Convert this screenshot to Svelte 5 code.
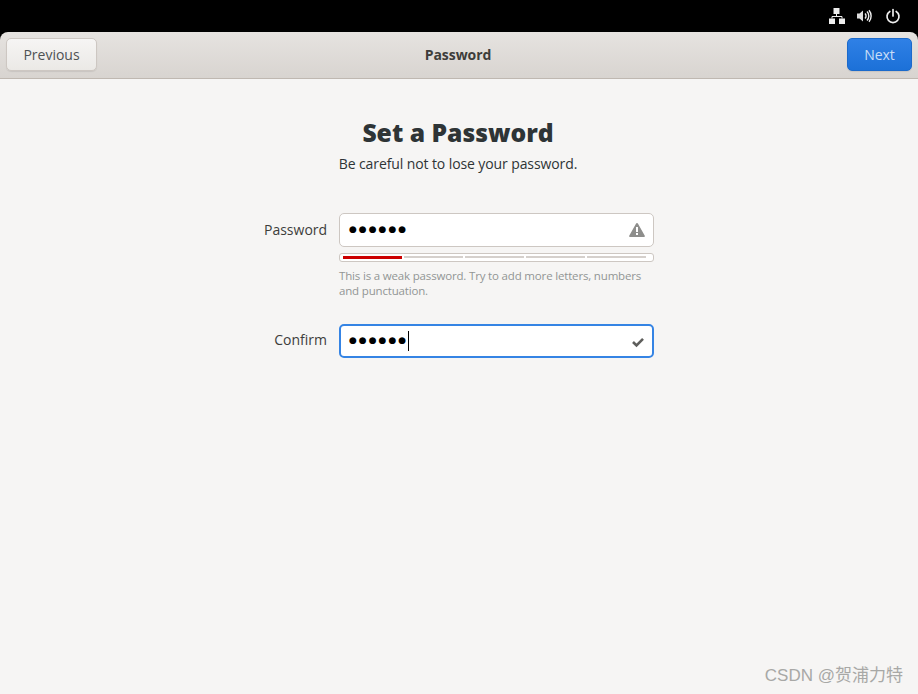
<script>
  const strengthSegments = [59, 59, 59, 59, 59];
  const dots = "●●●●●●";
</script>

<div class="screen">
  <div class="topbar">
    <svg class="tray network" width="16" height="16" viewBox="0 0 16 16">
      <path fill="#eee" d="M4.500 0h6v6h-6zM0 10.500h6V16H0zM10 10.500h6V16h-6z"/>
      <path fill="none" stroke="#eee" d="M7.500 6v2.500M3 10.500V8.500h10v2"/>
    </svg>
    <svg class="tray" width="16" height="16" viewBox="0 0 16 16">
      <path fill="#ddd" d="M1 5.500h2.500L7 2.500v11l-3.500-3H1z"/>
      <path fill="none" stroke="#eee" stroke-width="1.400" d="M9 5.500a3.500 3.500 0 0 1 0 5M11 3.500a6.500 6.500 0 0 1 0 9M13 2.200a9 9 0 0 1 0 11.600"/>
    </svg>
    <svg class="tray" width="16" height="16" viewBox="0 0 16 16">
      <path fill="none" stroke="#eee" stroke-width="1.700" stroke-linecap="round" d="M8 1.500V8M4.800 3.500a6 6 0 1 0 6.400 0"/>
    </svg>
  </div>

  <header class="headerbar">
    <button class="btn">Previous</button>
    <span class="page-title">Password</span>
    <button class="btn primary">Next</button>
  </header>

  <main class="content">
    <h1>Set a Password</h1>
    <p class="subtitle">Be careful not to lose your password.</p>

    <div class="form">
      <span class="label">Password</span>
      <div class="entry">
        <span class="dots">{dots}</span>
        <svg width="16" height="16" viewBox="0 0 16 16">
          <path fill="#8e8e8c" fill-rule="evenodd" d="M8 1c.4 0 .7.200.9.500l6.900 12.300c.3.600-.1 1.200-.8 1.200H1c-.7 0-1.100-.6-.8-1.200L7.100 1.500C7.300 1.200 7.600 1 8 1zM7 5v5h2V5zm0 6v2h2v-2z"/>
        </svg>
      </div>

      <div class="strength">
        <div class="fill"></div>
        {#each strengthSegments as w}
          <div class="segment" style="width: {w}px"></div>
        {/each}
      </div>
      <p class="hint">This is a weak password. Try to add more letters, numbers and punctuation.</p>

      <span class="label confirm-label">Confirm</span>
      <div class="entry focused confirm-entry">
        <span class="dots">{dots}</span><span class="caret"></span>
        <svg class="check" width="16" height="16" viewBox="0 0 16 16">
          <path fill="none" stroke="#5e5e5c" stroke-width="2.600" d="M3 8l3.500 3.500L13 4.800"/>
        </svg>
      </div>
    </div>
  </main>

  <footer class="watermark">CSDN @贺浦力特</footer>
</div>

<style>
  :global(body) {
    margin: 0;
    background: #000;
  }
  .screen {
    width: 918px;
    height: 694px;
    display: flex;
    flex-direction: column;
    position: relative;
    overflow: hidden;
    font-family: "Open Sans", "Noto Sans", "Noto Sans CJK SC", sans-serif;
    color: #2e3436;
  }
  .topbar {
    height: 32px;
    flex: none;
    background: #000;
    display: flex;
    justify-content: flex-end;
    align-items: center;
    gap: 13px;
    padding-right: 17px;
    box-sizing: border-box;
  }
  .tray {
    display: block;
  }
  .network {
    margin-right: -2px;
  }
  .headerbar {
    height: 47px;
    flex: none;
    box-sizing: border-box;
    display: flex;
    align-items: center;
    justify-content: space-between;
    padding: 0 6px 1px;
    background: linear-gradient(#e6e3e0, #d8d4d0);
    border-bottom: 1px solid #bfb8b1;
    border-radius: 8px 8px 0 0;
    position: relative;
  }
  .page-title {
    position: absolute;
    left: 0;
    right: 2px;
    text-align: center;
    font-size: 14px;
    font-weight: 700;
    color: #3d3d3b;
    letter-spacing: -0.05px;
  }
  .btn {
    width: 91px;
    height: 33px;
    padding: 0;
    font: inherit;
    font-size: 14px;
    color: #4e5254;
    background: linear-gradient(#f6f5f4, #ebe9e6);
    border: 1px solid #cdc7c2;
    border-radius: 5px;
    box-shadow: 0 1px 1px rgba(0, 0, 0, 0.08);
  }
  .btn.primary {
    width: 65px;
    color: #c9def7;
    background: linear-gradient(#2f80e6, #1c71d8);
    border-color: #1b6acb;
  }
  .content {
    flex: 1;
    background: #f6f5f4;
    display: flex;
    flex-direction: column;
    align-items: center;
  }
  h1 {
    margin: 37px 0 0;
    padding-right: 2px;
    font-size: 24.700px;
    line-height: 33px;
    font-weight: 800;
    color: #2e3436;
  }
  .subtitle {
    margin: 5px 0 0;
    padding-right: 2px;
    font-size: 14px;
    line-height: 19px;
    letter-spacing: -0.1px;
    color: #2e3436;
  }
  .form {
    margin-top: 40px;
    display: grid;
    grid-template-columns: 63px 315px;
    column-gap: 12px;
  }
  .label {
    align-self: center;
    text-align: right;
    font-size: 14px;
    line-height: 19px;
    color: #3d3d3b;
    white-space: nowrap;
    padding-bottom: 2px;
  }
  .entry {
    height: 34px;
    box-sizing: border-box;
    background: #fff;
    border: 1px solid #cdc7c2;
    border-radius: 5px;
    display: flex;
    align-items: center;
    padding: 0 8px;
  }
  .entry svg {
    margin-left: auto;
  }
  .dots {
    margin-left: 1px;
    padding-bottom: 1px;
    font-family: "DejaVu Sans", sans-serif;
    font-size: 9px;
    letter-spacing: 2px;
    color: #000;
    line-height: 1;
  }
  .strength {
    grid-column: 2;
    margin-top: 6px;
    height: 9px;
    box-sizing: border-box;
    border: 1px solid #cdc7c2;
    border-radius: 3px;
    background: #fff;
    display: flex;
    gap: 2px;
    padding: 2px 3px 1px;
    position: relative;
  }
  .segment {
    height: 2px;
    box-sizing: border-box;
    border: 1px solid #d5d0cc;
    border-width: 1px 0;
    background: #f6f5f4;
  }
  .fill {
    position: absolute;
    left: 3px;
    top: 2px;
    width: 59px;
    height: 3px;
    background: #cc0000;
  }
  .hint {
    grid-column: 2;
    margin: 6px 0 0;
    font-size: 11.500px;
    line-height: 15px;
    letter-spacing: -0.17px;
    color: #929595;
  }
  .confirm-label {
    margin-top: 25px;
  }
  .confirm-entry {
    margin-top: 26px;
  }
  .entry.focused {
    border: 2px solid #3584e4;
    padding: 0 6px 0 7px;
  }
  .caret {
    width: 1px;
    height: 20px;
    background: #000;
  }
  .check {
    margin-top: 1px;
  }
  .watermark {
    position: absolute;
    right: 15px;
    bottom: 8px;
    font-size: 17px;
    color: #a8a8a6;
    font-family: "Liberation Sans", "Noto Sans CJK SC", sans-serif;
  }
</style>
